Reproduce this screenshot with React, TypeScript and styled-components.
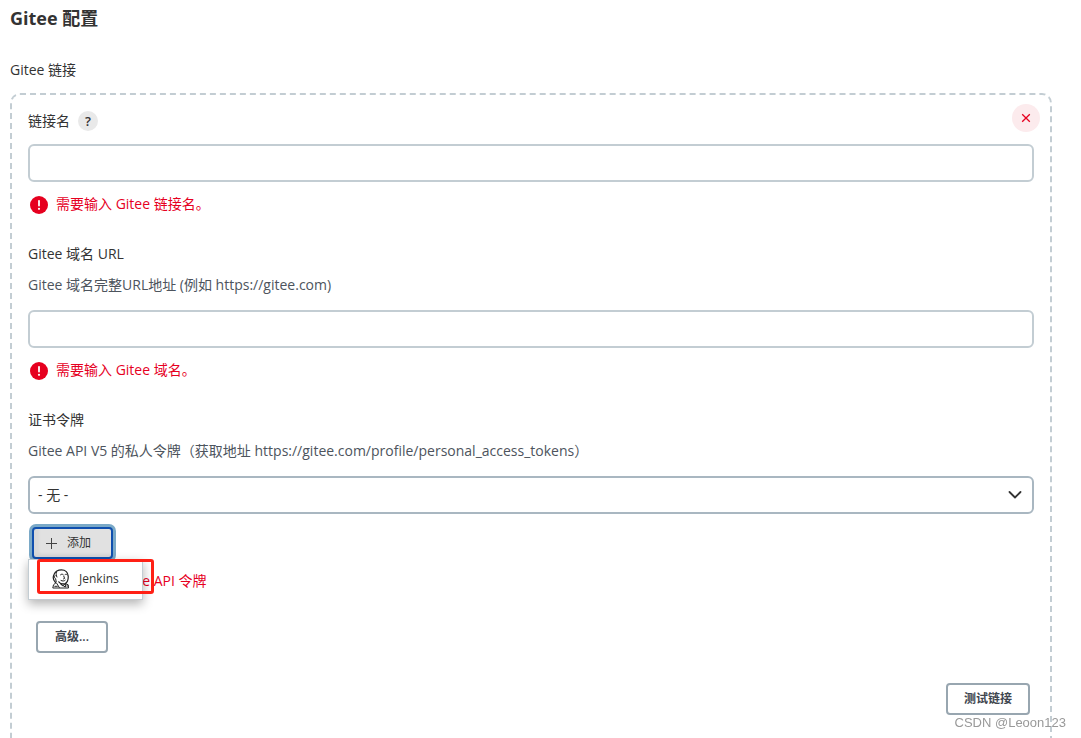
import React from 'react';
import styled, { createGlobalStyle, css } from 'styled-components';

const GlobalStyle = createGlobalStyle`
  *, *::before, *::after { box-sizing: border-box; }
  body {
    margin: 0;
    background: #fff;
    color: #333;
    font: 14px/20px 'Open Sans', 'Noto Sans CJK SC', sans-serif;
  }
  button, input, select { font: inherit; color: inherit; }
`;

const Page = styled.main`
  height: 100vh;
  overflow: hidden;
  padding: 8px 29px 0 10px;
`;

const Title = styled.h1`
  margin: 0;
  font-size: 18px;
  line-height: 20px;
  font-weight: 700;
`;

const SectionLabel = styled.h2`
  margin: 32px 0 13px;
  font-size: 14px;
  font-weight: 400;
`;

const Panel = styled.section`
  position: relative;
  padding: 16px 16px 40px;
  border: 2px dashed #c3cdd3;
  border-radius: 10px;
`;

const Field = styled.div`
  display: flex;
  flex-direction: column;
  margin-bottom: 30px;
`;

const LabelRow = styled.div`
  display: flex;
  align-items: center;
  gap: 8px;
  height: 20px;
  margin-bottom: 13px;
`;

const Description = styled.p`
  margin: -2px 0 15px;
  color: #4d545d;
`;

const HelpButton = styled.button`
  width: 20px;
  height: 20px;
  padding: 0;
  border: 0;
  border-radius: 50%;
  background: #e9e9e9;
  font-size: 13px;
  line-height: 20px;
  font-weight: 600;
`;

const RemoveButton = styled.button`
  position: absolute;
  top: 9px;
  right: 10px;
  display: grid;
  place-items: center;
  width: 28px;
  height: 28px;
  padding: 0;
  border: 0;
  border-radius: 50%;
  background: #fcebed;
  color: #e6001f;
`;

const control = css`
  width: 100%;
  height: 38px;
  padding: 0 8px;
  border: 2px solid #c3cdd3;
  border-radius: 6px;
  background: #fff;
`;

const TextInput = styled.input`
  ${control}
`;

const SelectWrap = styled.div`
  position: relative;
  svg {
    position: absolute;
    top: 12px;
    right: 12px;
    pointer-events: none;
  }
`;

const Select = styled.select`
  ${control}
  appearance: none;
  border-color: #a9b7c1;
`;

const ErrorMessage = styled.p`
  display: flex;
  align-items: flex-start;
  gap: 8px;
  margin: 14px 0 0;
  padding-left: 2px;
  color: #e6001f;
  line-height: 16px;
  svg { flex: none; }
`;

const AddArea = styled.div`
  position: relative;
  margin-top: 13px;
  padding-left: 4px;
`;

const AddButton = styled.button`
  display: flex;
  align-items: center;
  gap: 10px;
  width: 81px;
  height: 32px;
  padding: 0 11px;
  border: 2px solid #0f4fae;
  border-radius: 4px;
  background: #e1e1e1;
  box-shadow: 0 0 0 3px #7aa9c7, inset 5px -3px 3px rgba(0, 0, 0, 0.04);
  font-size: 12px;
`;

const Menu = styled.div`
  position: absolute;
  z-index: 1;
  top: 32px;
  left: 0;
  width: 115px;
  height: 41px;
  border: 1px solid #c3cdd3;
  background: #fff;
  box-shadow: 0 4px 10px rgba(0, 0, 0, 0.3);
`;

const MenuItem = styled.button`
  display: flex;
  align-items: center;
  gap: 9px;
  width: 100%;
  height: 38px;
  padding: 0 0 0 23px;
  border: 0;
  background: none;
  font-size: 12px;
`;

const Highlight = styled.div`
  position: absolute;
  z-index: 2;
  top: 32px;
  left: 9px;
  width: 117px;
  height: 35px;
  border: 3px solid #ff2015;
  border-radius: 3px;
  pointer-events: none;
`;

const PlainButton = styled.button<{ $width: number }>`
  width: ${(p) => p.$width}px;
  height: 32px;
  padding: 0;
  border: 2px solid #98a6b0;
  border-radius: 4px;
  background: #fff;
  color: #40464f;
  font-size: 12px;
  font-weight: 600;
`;

const Actions = styled.div<{ $end?: boolean }>`
  display: flex;
  justify-content: ${(p) => (p.$end ? 'flex-end' : 'flex-start')};
  margin-bottom: 30px;
  padding: ${(p) => (p.$end ? '0 4px 0 0' : '0 0 0 8px')};
`;

const Watermark = styled.small`
  position: fixed;
  right: 15px;
  bottom: 5px;
  color: #999;
  font: 13px/20px 'Liberation Sans', sans-serif;
`;

const ErrorIcon = () => (
  <svg width="18" height="18" viewBox="0 0 18 18" aria-hidden="true">
    <circle cx="9" cy="9" r="9" fill="#e6001f" />
    <path d="M9 4.8v4.800" stroke="#fff" strokeWidth="1.800" strokeLinecap="round" />
    <circle cx="9" cy="12.800" r="1.100" fill="#fff" />
  </svg>
);

const JenkinsIcon = () => (
  <svg width="18" height="20" viewBox="0 0 18 20" fill="none" stroke="#222" strokeLinecap="round" strokeLinejoin="round" aria-hidden="true">
    <path d="M3.500 13.500C1.500 11.500 .8 8 2 5.500 3.500 2 6.500 .8 9.500 .8c4 0 6.500 2.700 6.700 6.200.2 3.500-.7 6.500-3 7.500-2.200.8-5 .2-6.400-1.700" strokeWidth="1.200" />
    <path d="M3 6.500c-1 1-.6 2.800.6 3.200l.6 3M4.500 3.500c-.6 1.500-.3 3 .4 4.500M8.500 5.800c.8-.9 2-.9 2.800-.1M13 5.600c.8-.6 1.700-.5 2.300.2M11.800 7.200l.8 2.300-1.100.4M9 11.500c1.500.8 3.200.7 4.200-.3" strokeWidth="1" />
    <path d="M3.800 13.800L1.500 15.800 .8 19h15.700l-.3-3.200-2.700-1.300M4.500 14l2.800 4.500M9 15.200l4.300 2.800.6-3.200-3.200 1.800zM2.800 17.300h2.500M14.800 17h1.200" strokeWidth="1" />
  </svg>
);

export default function App() {
  return (
    <>
      <GlobalStyle />
      <Page>
        <Title>Gitee 配置</Title>
        <SectionLabel>Gitee 链接</SectionLabel>
        <Panel>
          <RemoveButton aria-label="删除">
            <svg width="10" height="10" viewBox="0 0 10 10" stroke="currentColor" strokeWidth="1.300" aria-hidden="true">
              <path d="M1.200 1.200l7.600 7.600M8.800 1.200l-7.600 7.600" />
            </svg>
          </RemoveButton>
          <Field>
            <LabelRow>
              <label htmlFor="name">链接名</label>
              <HelpButton>?</HelpButton>
            </LabelRow>
            <TextInput id="name" />
            <ErrorMessage><ErrorIcon />需要输入 Gitee 链接名。</ErrorMessage>
          </Field>
          <Field>
            <LabelRow><label htmlFor="url">Gitee 域名 URL</label></LabelRow>
            <Description>Gitee 域名完整URL地址 (例如 https://gitee.com)</Description>
            <TextInput id="url" />
            <ErrorMessage><ErrorIcon />需要输入 Gitee 域名。</ErrorMessage>
          </Field>
          <Field>
            <LabelRow><label htmlFor="token">证书令牌</label></LabelRow>
            <Description>Gitee API V5 的私人令牌（获取地址 https://gitee.com/profile/personal_access_tokens）</Description>
            <SelectWrap>
              <Select id="token"><option>- 无 -</option></Select>
              <svg width="14" height="14" viewBox="0 0 14 14" fill="none" stroke="#333" strokeWidth="1.800" strokeLinecap="round" strokeLinejoin="round" aria-hidden="true">
                <path d="M1.500 4L7 9.500 12.500 4" />
              </svg>
            </SelectWrap>
            <AddArea>
              <AddButton aria-haspopup="menu" aria-expanded="true">
                <svg width="12" height="12" viewBox="0 0 12 12" stroke="#444" aria-hidden="true"><path d="M6.500 1v11M1 6.500h11" /></svg>
                添加
              </AddButton>
              <Menu role="menu">
                <MenuItem role="menuitem"><JenkinsIcon />Jenkins</MenuItem>
              </Menu>
              <Highlight />
            </AddArea>
            <ErrorMessage><ErrorIcon />需要输入 Gitee API 令牌</ErrorMessage>
          </Field>
          <Actions><PlainButton $width={72}>高级...</PlainButton></Actions>
          <Actions $end><PlainButton $width={84}>测试链接</PlainButton></Actions>
        </Panel>
      </Page>
      <Watermark>CSDN @Leoon123</Watermark>
    </>
  );
}
